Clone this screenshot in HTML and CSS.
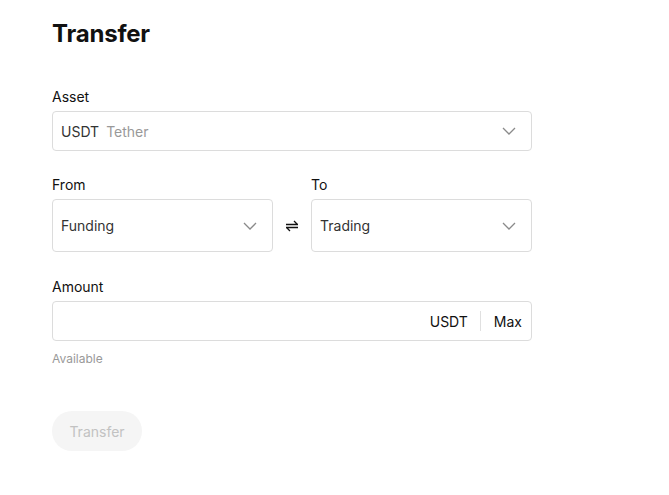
FILE: index.html
```html
<!DOCTYPE html>
<html>
<head>
<meta charset="utf-8">
<link rel="stylesheet" href="styles.css">
</head>
<body>
<div class="page">
  <h1 class="title">Transfer</h1>

  <div class="field asset-field">
    <div class="label">Asset</div>
    <div class="box select">
      <span class="value"><span class="coin">USDT</span><span class="coin-name">Tether</span></span>
      <svg class="chev" width="14" height="8" viewBox="0 0 14 8"><path d="M1 1l6 6 6-6" fill="none" stroke="#8a8a8a" stroke-width="1.3"/></svg>
    </div>
  </div>

  <div class="row">
    <div class="field col">
      <div class="label">From</div>
      <div class="box select tall">
        <span class="value">Funding</span>
        <svg class="chev" width="14" height="8" viewBox="0 0 14 8"><path d="M1 1l6 6 6-6" fill="none" stroke="#8a8a8a" stroke-width="1.3"/></svg>
      </div>
    </div>
    <div class="swap">
      <svg width="14" height="12" viewBox="0 0 14 12"><path d="M1 4.5h12M9 1l3.5 3.5M13 7.5H1M5 11L1.5 7.5" fill="none" stroke="#111" stroke-width="1.3"/></svg>
    </div>
    <div class="field col">
      <div class="label">To</div>
      <div class="box select tall">
        <span class="value">Trading</span>
        <svg class="chev" width="14" height="8" viewBox="0 0 14 8"><path d="M1 1l6 6 6-6" fill="none" stroke="#8a8a8a" stroke-width="1.3"/></svg>
      </div>
    </div>
  </div>

  <div class="field amount-field">
    <div class="label">Amount</div>
    <div class="box amount">
      <span class="unit">USDT</span>
      <span class="divider"></span>
      <span class="max">Max</span>
    </div>
    <div class="available">Available</div>
  </div>

  <button class="btn">Transfer</button>
</div>
</body>
</html>
```

FILE: styles.css
```css
* { box-sizing: border-box; }
body {
  margin: 0;
  background: #fff;
  font-family: Inter, "Noto Sans", sans-serif;
  color: #111;
}
.page {
  width: 480px;
  margin-left: 52px;
  padding-top: 19px;
}
.title {
  margin: 0;
  font-size: 24px;
  font-weight: 700;
  line-height: 30px;
  letter-spacing: -0.2px;
}
.field { display: flex; flex-direction: column; }
.asset-field { margin-top: 38px; }
.label {
  font-size: 14px;
  line-height: 20px;
  font-weight: 400;
  color: #111;
  margin-bottom: 4px;
}
.box {
  border: 1px solid #dcdcdc;
  border-radius: 4px;
  height: 40px;
  display: flex;
  align-items: center;
  padding: 0 15px 0 8px;
}
.select { justify-content: space-between; }
.tall { height: 53px; }
.value { font-size: 14px; color: #333; }
.coin { color: #333; }
.coin-name { color: #999; margin-left: 7px; }
.row {
  display: flex;
  align-items: flex-end;
  margin-top: 24px;
}
.col { width: 221px; }
.swap {
  width: 38px;
  height: 53px;
  display: flex;
  align-items: center;
  justify-content: center;
}
.amount-field { margin-top: 25px; }
.amount { justify-content: flex-end; padding-right: 9px; }
.unit { font-size: 14px; color: #111; }
.divider {
  width: 1px;
  height: 20px;
  background: #e0e0e0;
  margin: 0 13px 0 12px;
}
.max { font-size: 14px; color: #111; }
.available {
  font-size: 12px;
  color: #999;
  margin-top: 10px;
  line-height: 16px;
}
.btn {
  margin-top: 44px;
  width: 90px;
  height: 40px;
  border: none;
  border-radius: 20px;
  background: #f5f5f5;
  color: #c2c2c2;
  font-family: inherit;
  font-size: 14px;
  cursor: default;
}
```
